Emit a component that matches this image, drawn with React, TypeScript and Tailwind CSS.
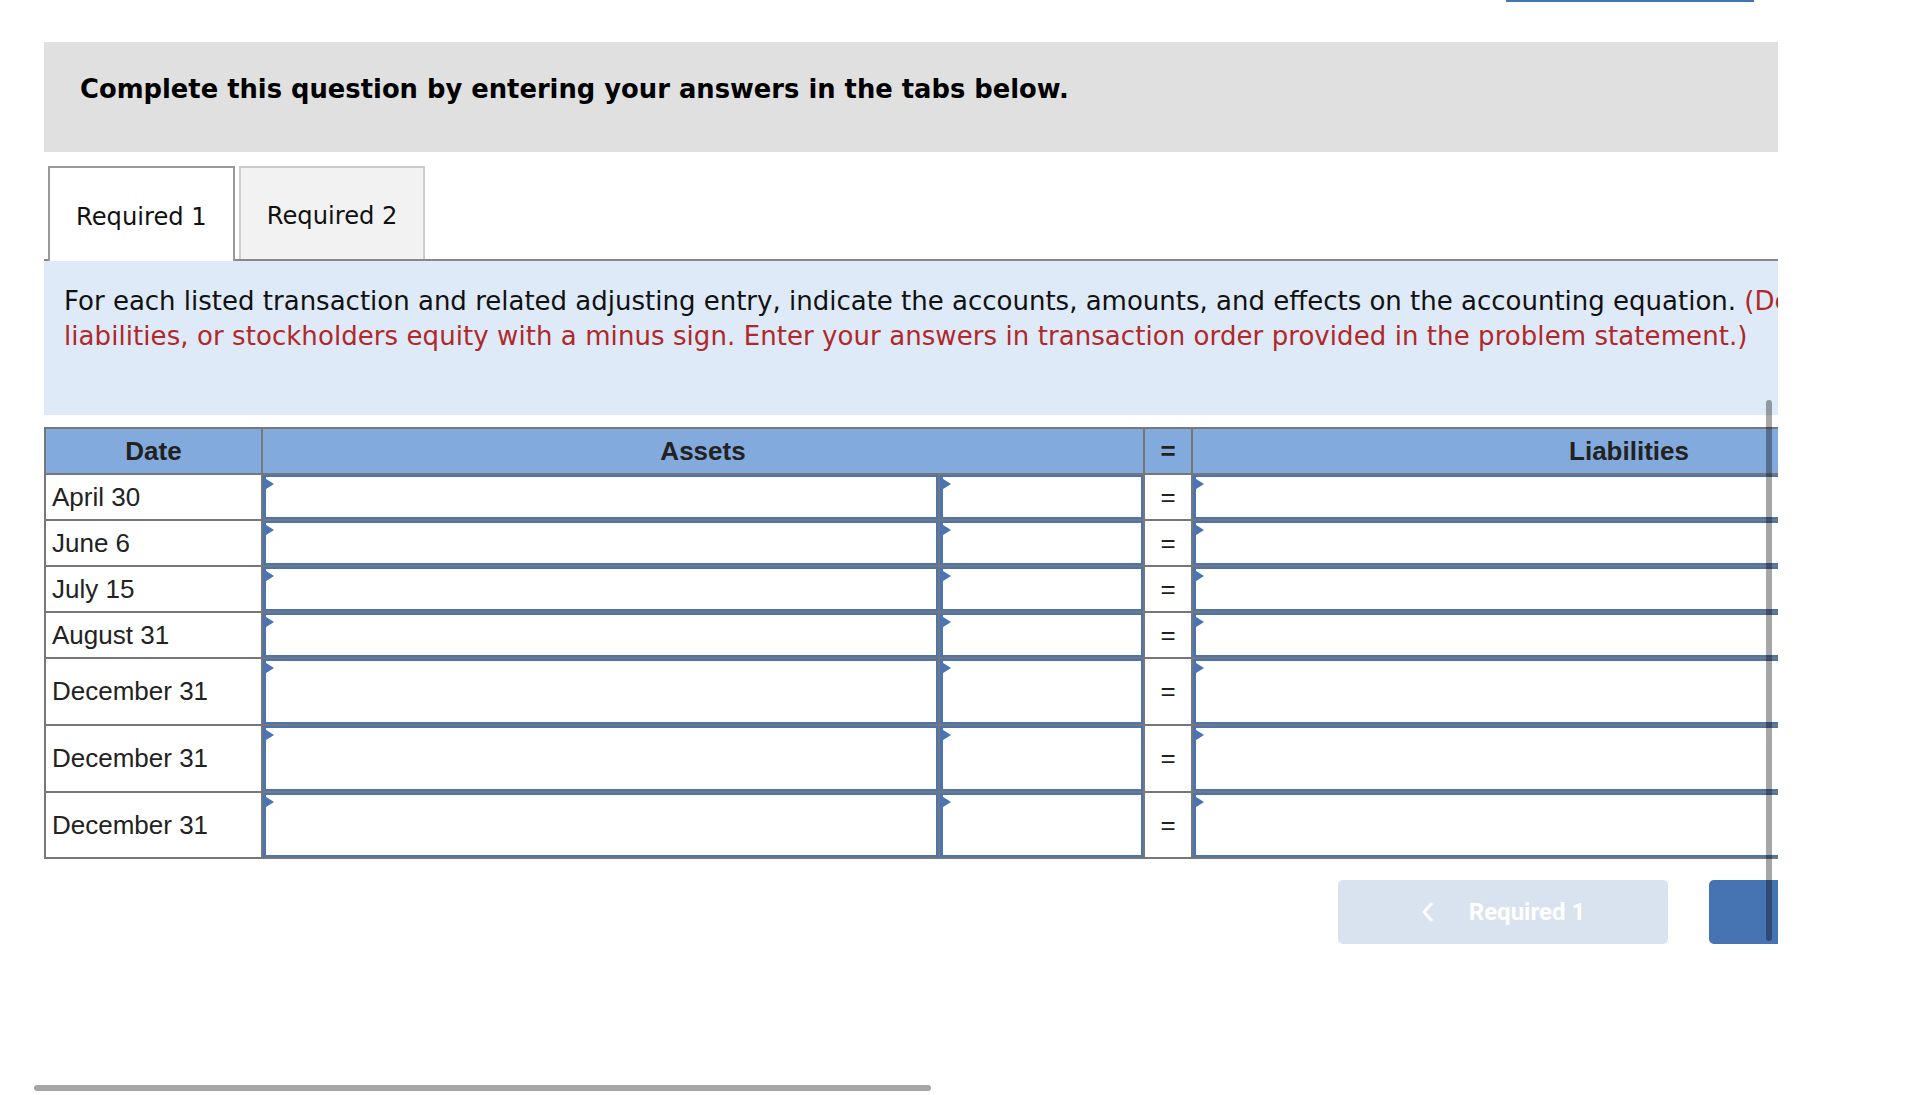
const rows = [
  { date: "April 30", h: "h-[46px]" },
  { date: "June 6", h: "h-[46px]" },
  { date: "July 15", h: "h-[46px]" },
  { date: "August 31", h: "h-[46px]" },
  { date: "December 31", h: "h-[67px]" },
  { date: "December 31", h: "h-[67px]" },
  { date: "December 31", h: "h-[66px]" },
];

function Flag() {
  return (
    <svg className="absolute -left-[3px] top-0" width="11" height="14" viewBox="0 0 11 14">
      <polygon points="0,0 11,7 0,14" fill="#4a74b4" />
    </svg>
  );
}

function Entry({ className }: { className: string }) {
  return (
    <div className={`border-r-2 border-b-2 border-[#777] ${className}`}>
      <div className="relative h-full border-2 border-l-[3px] border-[#4a74b4] bg-white">
        <Flag />
      </div>
    </div>
  );
}

function Sign({ children }: { children: string }) {
  return (
    <div className="w-[48px] border-r-2 border-b-2 border-[#777] flex items-center justify-center">
      {children}
    </div>
  );
}

export default function App() {
  return (
    <div className="relative h-[1095px] overflow-hidden bg-white font-['Liberation_Sans',Arial,sans-serif]">
      {/* bottom edge of the button above */}
      <div className="ml-[1506px] h-[2px] w-[248px] bg-[#4673b1]" />

      <div className="ml-[44px] mt-[40px] w-[1734px] overflow-hidden">
        <div className="w-[1995px]">
          {/* HEADER */}
          <div className="h-[110px] bg-[#e0e0e0] pl-[36px] pt-[31px] font-['DejaVu_Sans',Verdana,sans-serif] text-[25.8px] leading-[32px] font-bold text-black">
            Complete this question by entering your answers in the tabs below.
          </div>

          {/* TABS */}
          <div className="mt-[14px] flex items-start gap-[4px] pl-[4px] border-b-2 border-[#888] font-['DejaVu_Sans',Verdana,sans-serif] text-[24.2px] text-[#111]">
            <div className="-mb-[2px] h-[95px] flex items-center pt-[5px] border-2 border-b-0 border-[#999] bg-white px-[26px]">
              Required 1
            </div>
            <div className="h-[93px] flex items-center pt-[5px] border-2 border-b-0 border-[#ccc] bg-[#f2f2f2] px-[26px]">
              Required 2
            </div>
          </div>

          {/* INSTRUCTIONS */}
          <div className="h-[154px] bg-[#deeaf7] pl-[20px] pt-[23px] font-['DejaVu_Sans',Verdana,sans-serif] text-[26px] leading-[35px] whitespace-nowrap text-[#111]">
            For each listed transaction and related adjusting entry, indicate the accounts, amounts, and effects on the accounting equation.{" "}
            <span className="text-[#b0282a]">(Denote decreases to assets,</span>
            <br />
            <span className="text-[#b0282a] tracking-[0.07px]">
              liabilities, or stockholders equity with a minus sign. Enter your answers in transaction order provided in the problem statement.)
            </span>
          </div>

          {/* TABLE */}
          <div className="mt-[12px] w-max border-t-2 border-l-2 border-[#777] text-[26px] text-[#222]">
            <div className="flex h-[46px] bg-[#82aadd] font-bold">
              <div className="w-[217px] border-r-2 border-b-2 border-[#777] flex items-center justify-center">Date</div>
              <div className="w-[882px] border-r-2 border-b-2 border-[#777] flex items-center justify-center">Assets</div>
              <Sign>=</Sign>
              <div className="w-[874px] border-r-2 border-b-2 border-[#777] flex items-center justify-center">Liabilities</div>
              <Sign>+</Sign>
              <div className="w-[874px] border-r-2 border-b-2 border-[#777] flex items-center justify-center">Stockholders' Equity</div>
            </div>

            {rows.map((row, index) => (
              <div key={index} className={`flex ${row.h}`}>
                <div className="w-[217px] border-r-2 border-b-2 border-[#777] flex items-center pl-[6px]">{row.date}</div>
                <Entry className="w-[677px]" />
                <Entry className="w-[205px]" />
                <Sign>=</Sign>
                <Entry className="w-[669px]" />
                <Entry className="w-[205px]" />
                <Sign>+</Sign>
                <Entry className="w-[669px]" />
                <Entry className="w-[205px]" />
              </div>
            ))}
          </div>

          {/* NAV BUTTONS */}
          <div className="mt-[21px] flex justify-end gap-[41px] font-['Roboto',sans-serif] text-[24px] font-bold text-white">
            <div className="h-[64px] w-[330px] rounded-[5px] bg-[#d9e3ef] flex items-center justify-center gap-[34px]">
              <svg width="14" height="22" viewBox="0 0 14 22">
                <polyline points="11,2 3,11 11,20" fill="none" stroke="white" strokeWidth="3" />
              </svg>
              <span>Required 1</span>
            </div>
            <div className="h-[64px] w-[330px] rounded-[5px] bg-[#4673b1] flex items-center justify-center gap-[34px]">
              <span>Required 2</span>
              <svg width="14" height="22" viewBox="0 0 14 22">
                <polyline points="3,2 11,11 3,20" fill="none" stroke="white" strokeWidth="3" />
              </svg>
            </div>
          </div>
        </div>
      </div>

      {/* overlay scrollbars */}
      <div className="absolute left-[1766px] top-[400px] h-[541px] w-[6px] rounded-full bg-black/35" />
      <div className="absolute left-[34px] top-[1085px] h-[6px] w-[897px] rounded-full bg-[#a6a6a6]" />
    </div>
  );
}
